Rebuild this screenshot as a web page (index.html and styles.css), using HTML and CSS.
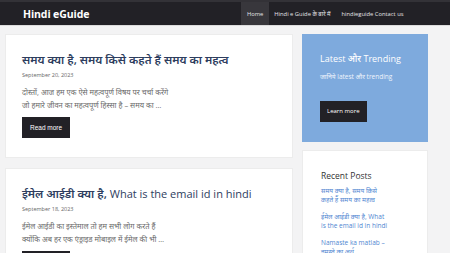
FILE: index.html
```html
<!DOCTYPE html>
<html lang="hi">

<head>
  <meta charset="UTF-8">
  <title>Hindi eGuide</title>
  <meta name="viewport" content="width=device-width, initial-scale=1">
  <link rel="stylesheet" href="styles.css">
</head>

<body>
  <header class="site-header">
    <a class="brand" href="#">Hindi eGuide</a>
    <nav>
      <ul class="menu">
        <li class="active"><a href="#">Home</a></li>
        <li><a href="#">Hindi e Guide के बारे में</a></li>
        <li><a href="#">hindieguide Contact us</a></li>
      </ul>
    </nav>
  </header>

  <div class="layout">
    <main class="posts">
      <article class="card">
        <h2 class="post-title"><a href="#">समय क्या है, समय किसे कहते हैं समय का महत्व</a></h2>
        <p class="post-date">September 20, 2023</p>
        <p class="excerpt">दोस्तों, आज हम एक ऐसे महत्वपूर्ण विषय पर चर्चा करेंगे<br>जो हमारे जीवन का महत्वपूर्ण हिस्सा है – समय का …</p>
        <a class="btn" href="#">Read more</a>
      </article>

      <article class="card">
        <h2 class="post-title"><a href="#">ईमेल आईडी क्या है, <span class="latin">What is the email id in hindi</span></a></h2>
        <p class="post-date">September 18, 2023</p>
        <p class="excerpt">ईमेल आईडी का इस्तेमाल तो हम सभी लोग करते हैं<br>क्योंकि अब हर एक एंड्राइड मोबाइल में ईमेल की भी …</p>
        <a class="btn" href="#">Read more</a>
      </article>
    </main>

    <aside class="sidebar">
      <section class="promo">
        <h3>Latest और Trending</h3>
        <p>जानिये latest और trending</p>
        <a class="btn" href="#">Learn more</a>
      </section>

      <section class="widget">
        <h3>Recent Posts</h3>
        <ul class="recent">
          <li><a href="#">समय क्या है, समय किसे कहते हैं समय का महत्व</a></li>
          <li><a href="#">ईमेल आईडी क्या है, What is the email id in hindi</a></li>
          <li><a href="#">Namaste ka matlab – नमस्ते का अर्थ</a></li>
        </ul>
      </section>
    </aside>
  </div>
</body>

</html>
```

FILE: styles.css
```css
* {
  box-sizing: border-box;
  margin: 0;
  padding: 0;
}

html {
  font-family: "Open Sans", "Noto Sans", sans-serif;
  background: #f3f3f4;
  color: #555;
}

body {
  height: 253px;
  overflow: hidden;
}

a {
  text-decoration: none;
  color: inherit;
}

/* header */

.site-header {
  height: 26px;
  display: flex;
  align-items: stretch;
  justify-content: space-between;
  background: #222126;
  border-top: 2px solid #333237;
  border-bottom: 1px solid #dcdcdc;
}

.brand {
  display: flex;
  align-items: center;
  padding-left: 23px;
  color: #fff;
  font-family: "Open Sans", sans-serif;
  font-weight: 700;
  font-size: 10.5px;
  letter-spacing: -0.1px;
}

.menu {
  list-style: none;
  display: flex;
  height: 100%;
  margin-right: 41px;
}

.menu li {
  display: flex;
}

.menu a {
  display: flex;
  align-items: center;
  padding: 0 5.5px;
  font-size: 5.8px;
  color: #e4e4e6;
}

.menu .active a {
  background: #38373c;
}

/* content */

.layout {
  display: grid;
  grid-template-columns: 288px 126px;
  column-gap: 9px;
  padding: 8px 0 0 5px;
}

.posts {
  display: flex;
  flex-direction: column;
  gap: 10px;
}

.card {
  background: #fff;
  border: 1px solid #ececec;
  padding: 14px 16px 19px;
}

.post-title {
  font-size: 11.5px;
  line-height: 22px;
  font-weight: 600;
  color: #2d3d5e;
  white-space: nowrap;
}

.post-title .latin {
  font-weight: 500;
  font-size: 11px;
}

.post-date {
  font-size: 5.5px;
  line-height: 8px;
  color: #666;
}

.excerpt {
  margin-top: 7px;
  font-size: 7.5px;
  line-height: 13px;
  color: #6a6a6a;
}

.btn {
  display: inline-block;
  margin-top: 5px;
  padding: 0 8px;
  height: 21px;
  line-height: 21px;
  background: #222126;
  color: #fff;
  font-family: "Liberation Sans", Arial, sans-serif;
  font-size: 6.5px;
}

/* sidebar */

.sidebar {
  display: flex;
  flex-direction: column;
  gap: 8px;
}

.promo {
  background: #7eaadd;
  color: #fff;
  height: 108px;
  padding: 18px 18px;
}

.promo h3 {
  font-size: 9px;
  line-height: 14px;
  font-weight: 500;
}

.promo p {
  margin-top: 6px;
  font-size: 6.5px;
  line-height: 10px;
  color: #eef4fc;
}

.promo .btn {
  margin-top: 19px;
  padding: 0 7px;
  font-family: "Open Sans", sans-serif;
  font-size: 6px;
}

.widget {
  background: #fff;
  border: 1px solid #ececec;
  height: 110px;
  padding: 19px 18px;
}

.widget h3 {
  font-size: 8.5px;
  line-height: 12px;
  font-weight: 400;
  color: #333;
}

.recent {
  list-style: none;
  width: 68px;
  margin-top: 5px;
}

.recent li {
  margin-bottom: 9px;
  font-size: 6.5px;
  line-height: 8.5px;
  color: #4f86d1;
}
```
